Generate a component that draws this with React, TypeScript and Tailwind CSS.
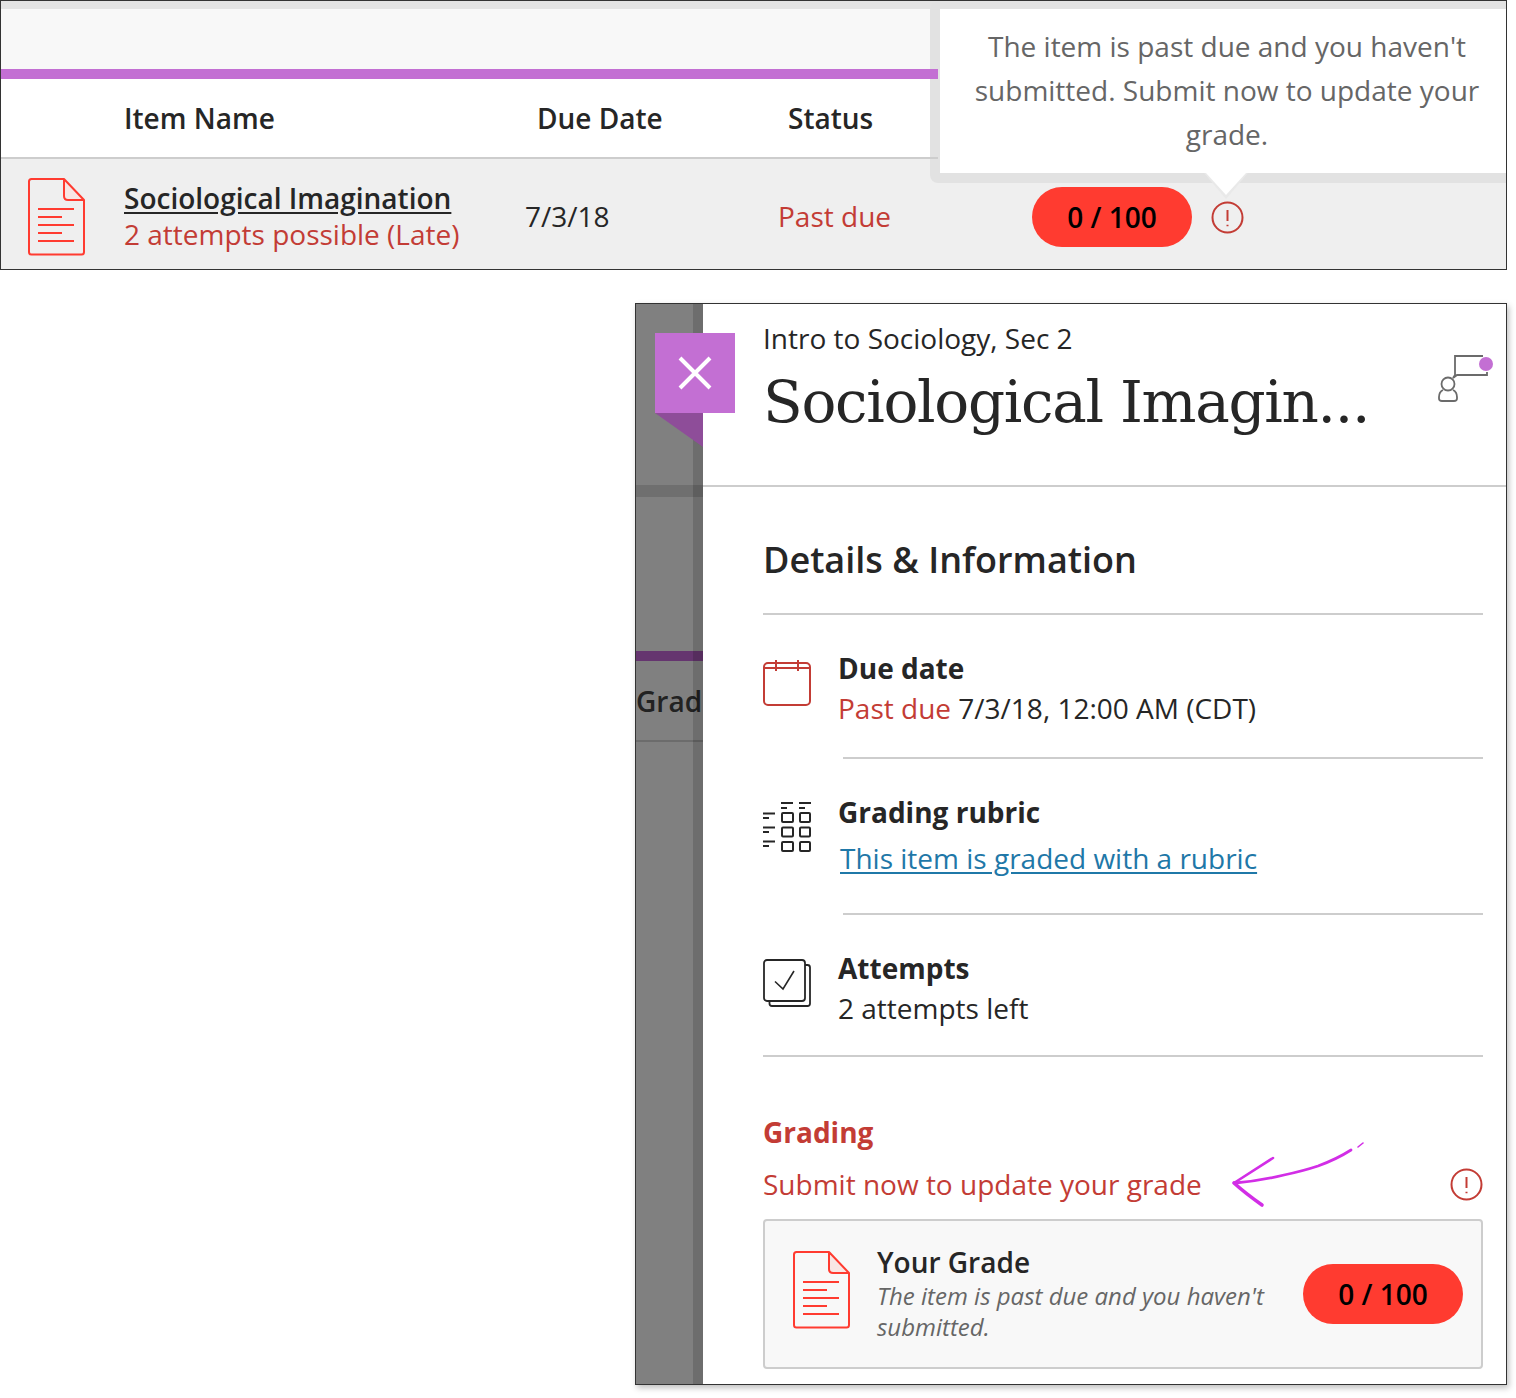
import React from 'react'

const sans = "font-['Open_Sans',sans-serif]"

function DocIcon() {
  return (
    <svg width="58" height="78" viewBox="0 0 58 78" fill="none" className="shrink-0">
      <path d="M36 1.5 L56 22 H40 Q36 22 36 18 Z" fill="#f8e6e4" />
      <path d="M3.5 1 H36 L56 22 V74 Q56 76.5 53.5 76.5 H3.5 Q1 76.5 1 74 V3.5 Q1 1 3.5 1 Z M36 1 V18 Q36 22 40 22 H56" stroke="#ff3b30" strokeWidth="2" strokeLinejoin="round" />
      <path d="M10 31 H46 M10 39 H34 M10 47 H46 M10 55 H34 M10 63 H46" stroke="#ff3b30" strokeWidth="2" />
    </svg>
  )
}

function AlertIcon() {
  return (
    <svg width="33" height="33" viewBox="0 0 33 33" fill="none" className="shrink-0">
      <circle cx="16.5" cy="16.5" r="15" stroke="#c33c35" strokeWidth="2" />
      <path d="M16.5 9 V20" stroke="#c33c35" strokeWidth="2" />
      <path d="M15.5 24.5 H17.5" stroke="#c33c35" strokeWidth="1.5" />
    </svg>
  )
}

function GradePill() {
  return (
    <div className="w-[160px] h-[60px] rounded-full bg-[#ff3b30] flex items-center justify-center shrink-0 text-[28px] font-semibold text-black">
      0 / 100
    </div>
  )
}

function CalendarIcon() {
  return (
    <svg width="48" height="46" viewBox="0 0 48 46" fill="none" stroke="#c33c35" strokeWidth="2">
      <rect x="1" y="3" width="46" height="42" rx="4" />
      <path d="M2 8 H46" />
      <path d="M13 0 V11 M35 0 V11" />
    </svg>
  )
}

function RubricIcon() {
  return (
    <svg width="48" height="50" viewBox="0 0 48 50" fill="none" stroke="#262626" strokeWidth="2">
      <path d="M18 1 H30 M18 6 H24 M36 1 H48 M36 6 H42" />
      <path d="M0 11.5 H12 M0 16 H6 M0 25.5 H12 M0 30 H6 M0 39.5 H12 M0 44 H6" />
      <rect x="19" y="11" width="11" height="9" rx="1" />
      <rect x="37" y="11" width="10" height="9" rx="1" />
      <rect x="19" y="25.5" width="11" height="9" rx="1" />
      <rect x="37" y="25.5" width="10" height="9" rx="1" />
      <rect x="19" y="40" width="11" height="9" rx="1" />
      <rect x="37" y="40" width="10" height="9" rx="1" />
    </svg>
  )
}

function AttemptsIcon() {
  return (
    <svg width="48" height="48" viewBox="0 0 48 48" fill="none" stroke="#262626" strokeWidth="1.8">
      <rect x="1" y="1" width="41" height="41" rx="3" />
      <path d="M42 6 H44.5 Q47 6 47 8.5 V44.5 Q47 47 44.5 47 H9 Q6.5 47 6.5 44.5 V42" />
      <path d="M12 22.5 L20 30 L31 12" strokeWidth="1.6" />
    </svg>
  )
}

function CommentIcon() {
  return (
    <svg width="56" height="52" viewBox="0 0 56 52" fill="none" className="shrink-0" stroke="#6b6b6b" strokeWidth="1.8">
      <path d="M46 6 H18 V25 L16 28 L20 25 H50 V22" />
      <circle cx="11" cy="34" r="6.5" />
      <path d="M6 40 Q2 42 2 47 V48.5 Q2 51 5 51 H17 Q20 51 20 48.5 V47 Q20 42 16 40" />
      <circle cx="49" cy="14" r="7" fill="#c36fd3" stroke="none" />
    </svg>
  )
}

function Arrow() {
  return (
    <svg width="134" height="68" viewBox="0 0 134 68" fill="none" className="shrink-0" stroke="#d22ee6" strokeLinecap="round">
      <path d="M3 42 L42 17" strokeWidth="2.6" />
      <path d="M3 42 Q14 52 31 64" strokeWidth="3.6" />
      <path d="M4 42 Q28 40 53 34 Q72 30 87 25 Q106 18 120 9" strokeWidth="2.8" />
      <path d="M127 6 L132 2" strokeWidth="1.6" />
    </svg>
  )
}

function Divider({ inset }: { inset?: boolean }) {
  return <div className={`h-0.5 bg-[#cdcdcd] ${inset ? 'ml-[80px]' : ''}`} />
}

export default function App() {
  return (
    <div className={`${sans} w-[1516px] h-[1398px] bg-white text-[#262626] flex flex-col items-start overflow-hidden`}>
      {/* course content row */}
      <div className="relative w-[1507px] h-[270px] border border-[#333] flex flex-col">
        <div className="h-2 bg-[#e3e3e3]" />
        <div className="h-[60px] bg-[#f8f8f8]" />
        <div className="relative z-10 w-[937px] h-2.5 bg-[#c36fd3]" />
        <div className="h-[78px] bg-white flex items-center text-[28px] font-semibold">
          <span className="ml-[123px] w-[413px]">Item Name</span>
          <span className="w-[251px]">Due Date</span>
          <span>Status</span>
        </div>
        <div className="relative z-10 w-[937px] h-0.5 bg-[#cdcdcd]" />
        <div className="flex-1 bg-[#efefef] flex items-center pt-[6px]">
          <div className="ml-[27px] w-[96px]"><DocIcon /></div>
          <div className="w-[401px] flex flex-col -mt-0.5">
            <span className="text-[28px] font-semibold underline leading-[36px] underline-offset-[3px]">Sociological Imagination</span>
            <span className="text-[28px] text-[#c33c35] leading-[36px]">2 attempts possible (Late)</span>
          </div>
          <span className="w-[253px] text-[28px] -mt-0.5">7/3/18</span>
          <span className="w-[254px] text-[28px] text-[#c33c35] -mt-0.5">Past due</span>
          <GradePill />
          <div className="ml-[19px]"><AlertIcon /></div>
        </div>

        {/* tooltip */}
        <div className="absolute left-[929px] top-px right-0 h-[181px] bg-[#e2e2e2] rounded-l-[8px] pl-2.5 pb-2.5 pt-[7px]">
          <div className="h-full bg-white flex items-center justify-center text-center text-[28px] leading-[44px] text-[#666] pl-2">
            <p className="w-[540px] -mt-[3px]">The item is past due and you haven't submitted. Submit now to update your grade.</p>
          </div>
          <svg width="44" height="28" viewBox="0 0 44 28" className="absolute left-[274px] top-[171px]">
            <path d="M0 0 H44 L22 26 Z" fill="#e9e9e9" />
            <path d="M2 0 H42 L22 22 Z" fill="#ffffff" />
          </svg>
        </div>
      </div>

      {/* peek panel */}
      <div className="relative ml-[635px] mt-[33px] w-[872px] h-[1082px] border border-[#333] flex shadow-[2px_3px_6px_rgba(0,0,0,0.25)]">
        <div className="relative w-[67px] shrink-0 bg-[#808080] flex flex-col overflow-hidden">
          <div className="h-[181px]" />
          <div className="h-3 bg-[#6f6f6f]" />
          <div className="h-[154px]" />
          <div className="h-2.5 bg-[#65356f]" />
          <div className="h-[79px] flex items-center text-[28px] font-semibold text-[#222] whitespace-nowrap">Grad</div>
          <div className="h-0.5 bg-[#6c6c6c]" />
          <div className="absolute right-0 top-0 bottom-0 w-2.5 bg-black/15" />
        </div>

        <div className="flex-1 min-w-0 bg-white flex flex-col">
          <div className="h-[181px] pl-[60px] pr-[13px] flex">
            <div className="flex-1 min-w-0 pt-[15px]">
              <div className="text-[28px] leading-[38px]">Intro to Sociology, Sec 2</div>
              <div className="font-['DejaVu_Serif',serif] text-[58px] leading-[64px] mt-[13px] whitespace-nowrap tracking-[-1.3px]">Sociological Imagin...</div>
            </div>
            <div className="pt-[46px]"><CommentIcon /></div>
          </div>
          <Divider />

          <div className="pl-[60px] pr-[23px] flex-1 flex flex-col">
            <h2 className="h-[126px] flex items-center pt-[20px] text-[36px] font-semibold">Details &amp; Information</h2>
            <Divider />

            <div className="h-[142px] flex pt-[45px] gap-[27px]">
              <CalendarIcon />
              <div className="-mt-[12px]">
                <div className="text-[28px] font-bold leading-[40px]">Due date</div>
                <div className="text-[28px] leading-[40px]"><span className="text-[#c33c35]">Past due</span> 7/3/18, 12:00 AM (CDT)</div>
              </div>
            </div>
            <Divider inset />

            <div className="h-[154px] flex pt-[43px] gap-[27px]">
              <RubricIcon />
              <div className="-mt-[10px]">
                <div className="text-[28px] font-bold leading-[40px]">Grading rubric</div>
                <a className="block mt-[6px] ml-0.5 text-[28px] leading-[40px] text-[#1f78a8] underline underline-offset-[3px]">This item is graded with a rubric</a>
              </div>
            </div>
            <Divider inset />

            <div className="h-[140px] flex pt-[44px] gap-[27px]">
              <AttemptsIcon />
              <div className="-mt-[11px]">
                <div className="text-[28px] font-bold leading-[40px]">Attempts</div>
                <div className="text-[28px] leading-[40px]">2 attempts left</div>
              </div>
            </div>
            <Divider />

            <h3 className="mt-[55px] text-[28px] font-bold leading-[40px] text-[#c33c35]">Grading</h3>
            <div className="mt-[12px] h-[40px] flex items-center text-[28px] text-[#c33c35]">
              <span>Submit now to update your grade</span>
              <div className="ml-[29px] mb-[18px]"><Arrow /></div>
              <div className="ml-auto"><AlertIcon /></div>
            </div>

            <div className="mt-[15px] h-[150px] border-2 border-[#cdcdcd] rounded-[4px] bg-[#f8f8f8] flex items-center pl-[28px] pr-[18px]">
              <div className="mb-[9px]"><DocIcon /></div>
              <div className="ml-[26px] flex-1 min-w-0 pb-[4px]">
                <div className="text-[28px] font-semibold leading-[40px]">Your Grade</div>
                <p className="-mt-[2px] text-[24px] italic leading-[31px] text-[#666] w-[400px]">The item is past due and you haven't submitted.</p>
              </div>
              <GradePill />
            </div>
          </div>
        </div>

        {/* close flag */}
        <button className="absolute left-[19px] top-[29px] w-20 h-20 bg-[#c36fd3] flex items-center justify-center">
          <svg width="34" height="34" viewBox="0 0 34 34" stroke="#fff" strokeWidth="4"><path d="M2 2 L32 32 M32 2 L2 32" /></svg>
        </button>
        <svg width="48" height="34" viewBox="0 0 48 34" className="absolute left-[19px] top-[109px]">
          <path d="M0 0 H48 V34 Z" fill="#8e4d99" />
        </svg>
      </div>
    </div>
  )
}
